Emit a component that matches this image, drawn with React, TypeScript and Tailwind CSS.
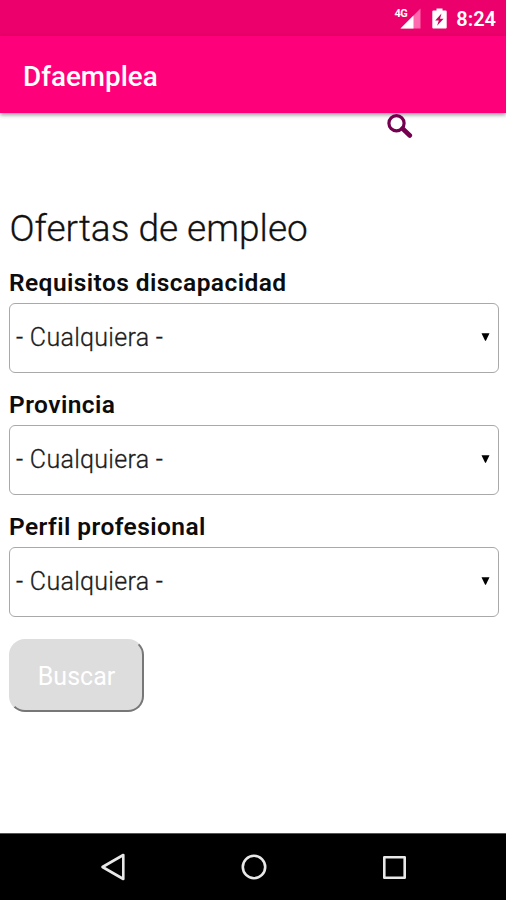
import React from 'react';

interface SelectFieldProps {
  label: string;
  value: string;
}

const SelectField: React.FC<SelectFieldProps> = ({ label, value }) => (
  <div className="mb-[10px]">
    <div className="h-[42px] pt-[5px] text-[24.5px] leading-[34px] font-semibold tracking-[0.43px] text-[#0c0c0c] whitespace-nowrap">
      {label}
    </div>
    <button className="flex h-[70px] w-full items-center justify-between rounded-md border border-[#a9a9a9] bg-white pr-[8px] pl-[6px]">
      <span className="text-[25px] leading-[34px] font-light tracking-[0.3px] text-[#1c1c1c] [-webkit-text-stroke:0.3px_#1c1c1c]">
        {value}
      </span>
      <svg className="-mt-[2px]" width="9" height="8" viewBox="0 0 9 8" fill="#000000">
        <path d="M0.5 0.3h8L4.9 7.8h-0.8z" />
      </svg>
    </button>
  </div>
);

const StatusBar = () => (
  <div className="flex h-9 items-center justify-end bg-[#ec006b] pr-[10px] text-white">
    <div className="flex items-start">
      <span className="-mr-[7px] text-[11px] leading-[12px] font-bold tracking-tighter">4G</span>
      <svg width="21" height="21" viewBox="0 0 21 21">
        <path d="M20.5 0.5v20H0.5z" fill="#ff69ad" />
        <path d="M13.5 7.5v13H0.5z" fill="#ffffff" />
      </svg>
    </div>
    <svg className="ml-[11px]" width="15" height="21" viewBox="0 0 15 21">
      <path d="M4.5 0.5h6v2h3.2a1 1 0 0 1 1 1v16a1 1 0 0 1-1 1H1.3a1 1 0 0 1-1-1v-16a1 1 0 0 1 1-1h3.2z" fill="#ffffff" />
      <path d="M9.5 5.5l-6.3 7h3.6l-1.7 5.2 6.5-7H8z" fill="#d10060" />
    </svg>
    <span className="ml-[9px] pt-px text-[20px] leading-6 font-semibold">8:24</span>
  </div>
);

const NavigationBar = () => (
  <nav className="flex h-[67px] items-center justify-between border-t border-[#555555] bg-black pr-[99px] pl-[100px]">
    <svg width="26" height="28" viewBox="0 0 26 28" fill="none" stroke="#e8e8e8" strokeWidth="2.6" strokeLinejoin="round">
      <path d="M23.3 2v24L2.5 14z" />
    </svg>
    <svg width="26" height="26" viewBox="0 0 26 26" fill="none" stroke="#e8e8e8" strokeWidth="2.6">
      <circle cx="13" cy="13" r="11.2" />
    </svg>
    <svg width="25" height="25" viewBox="0 0 25 25" fill="none" stroke="#e8e8e8" strokeWidth="2.6" strokeLinejoin="round">
      <path d="M2.3 2.3h20.4v20.4H2.3z" />
    </svg>
  </nav>
);

export default function App() {
  const filters = [
    { label: 'Requisitos discapacidad', value: '- Cualquiera -' },
    { label: 'Provincia', value: '- Cualquiera -' },
    { label: 'Perfil profesional', value: '- Cualquiera -' },
  ];

  return (
    <div className="flex h-[900px] w-[506px] flex-col overflow-hidden bg-white font-['Roboto',sans-serif]">
      <StatusBar />

      <header className="flex h-[77px] items-center bg-[#ff007b] pt-[5px] pl-[23px] shadow-[0_2px_4px_rgba(0,0,0,0.4)]">
        <h1 className="text-[27.8px] leading-8 font-medium text-white">Dfaemplea</h1>
      </header>

      <main className="flex-1 pr-[7px] pl-[9px]">
        {/* Search */}
        <div className="flex h-[91px] justify-end pr-[86px]">
          <svg className="mt-px" width="26" height="26" viewBox="0 0 26 26" fill="none" stroke="#74004f">
            <circle cx="9.5" cy="9.2" r="7.6" strokeWidth="3.2" />
            <path d="M15.5 14.5l7.3 7" strokeWidth="4.6" strokeLinecap="round" />
          </svg>
        </div>

        <h2 className="h-[57px] pl-[0.5px] text-[37px] leading-[50px] font-light text-[#111111] whitespace-nowrap [-webkit-text-stroke:0.3px_#111111]">
          Ofertas de empleo
        </h2>

        {filters.map((filter) => (
          <SelectField key={filter.label} label={filter.label} value={filter.value} />
        ))}

        <button className="mt-3 h-[73px] w-[135px] rounded-[16px] border-2 border-t-[#dddddd] border-r-[#777777] border-b-[#777777] border-l-[#dddddd] bg-[#dddddd] pt-[2px] text-[25px] text-white">
          Buscar
        </button>
      </main>

      <NavigationBar />
    </div>
  );
}
